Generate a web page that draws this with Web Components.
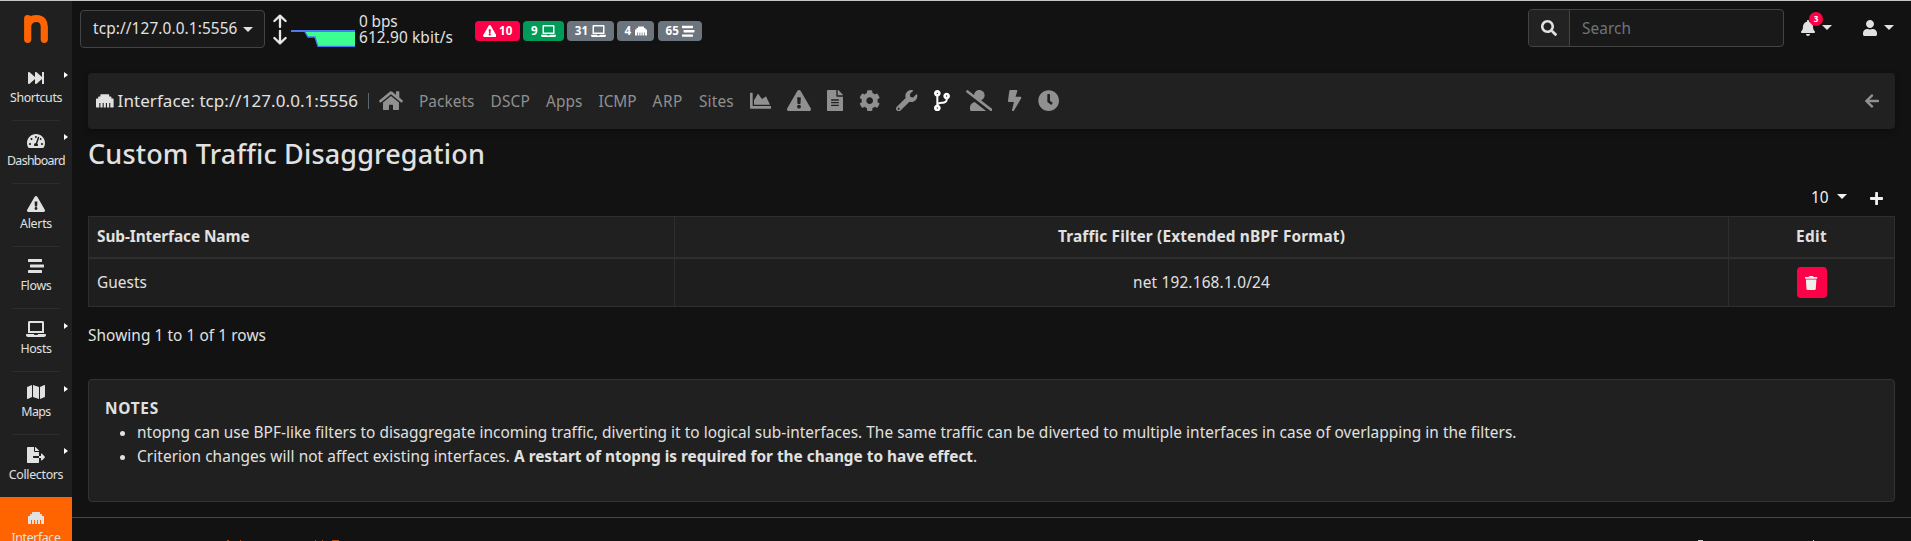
<!DOCTYPE html>
<html lang="en">
<head>
<meta charset="utf-8">
<title>ntopng - Custom Traffic Disaggregation</title>
<style>
html,body{margin:0;height:541px;overflow:hidden;background:#121212}
body{font-family:"Noto Sans",sans-serif;font-size:15.4px;line-height:24px;color:#e1e1e1}
</style>
</head>
<body>
<app-shell></app-shell>
<script>
const ICONS={
forward:[512,"M512 76v360c0 6.6-5.4 12-12 12h-40c-6.6 0-12-5.4-12-12V284.1L276.5 440.6c-20.6 17.2-52.5 2.8-52.5-24.6V284.1L52.5 440.6C31.9 457.8 0 443.4 0 416V96c0-27.4 31.9-41.7 52.5-24.6L224 226.8V96c0-27.4 31.9-41.7 52.5-24.6L448 226.8V76c0-6.6 5.4-12 12-12h40c6.6 0 12 5.4 12 12z"],
warn:[576,"M569.517 440.013C587.975 472.007 564.806 512 527.94 512H48.054c-36.937 0-59.999-40.055-41.577-71.987L246.423 23.985c18.467-32.009 64.72-31.951 83.154 0l239.94 416.028zM288 354c-25.405 0-46 20.595-46 46s20.595 46 46 46 46-20.595 46-46-20.595-46-46-46zm-43.673-165.346l7.418 136c.347 6.364 5.609 11.346 11.982 11.346h48.546c6.373 0 11.635-4.982 11.982-11.346l7.418-136c.375-6.874-5.098-12.654-11.982-12.654h-63.383c-6.884 0-12.356 5.78-11.981 12.654z"],
stream:[512,"M16 128h416c8.84 0 16-7.16 16-16V48c0-8.84-7.16-16-16-16H16C7.16 32 0 39.16 0 48v64c0 8.84 7.16 16 16 16zm480 80H80c-8.84 0-16 7.16-16 16v64c0 8.84 7.16 16 16 16h416c8.84 0 16-7.16 16-16v-64c0-8.84-7.16-16-16-16zm-64 176H16c-8.84 0-16 7.16-16 16v64c0 8.84 7.16 16 16 16h416c8.84 0 16-7.16 16-16v-64c0-8.84-7.16-16-16-16z"],
laptop:[640,"M624 416H381.54c-.74 19.81-14.71 32-32.74 32H288c-18.69 0-33.02-17.47-32.77-32H16c-8.8 0-16 7.2-16 16v16c0 35.2 28.8 64 64 64h512c35.2 0 64-28.8 64-64v-16c0-8.8-7.2-16-16-16zM576 48c0-26.4-21.6-48-48-48H112C85.6 0 64 21.6 64 48v336h512V48zm-64 272H128V64h384v256z"],
map:[576,"M0 117.66v346.32c0 11.32 11.43 19.06 21.94 14.86L160 416V32L20.12 87.95A32.006 32.006 0 0 0 0 117.66zM192 416l192 64V96L192 32v384zM554.06 33.16L416 96v384l139.88-55.95A31.996 31.996 0 0 0 576 394.34V48.02c0-11.32-11.43-19.06-21.94-14.86z"],
export:[576,"M384 121.9c0-6.3-2.5-12.4-7-16.9L279.1 7c-4.5-4.5-10.6-7-17-7H256v128h128zM571 308l-95.7-96.4c-10.1-10.1-27.4-3-27.4 11.3V288h-64v64h64v65.2c0 14.3 17.3 21.4 27.4 11.3L571 332c6.6-6.6 6.6-17.4 0-24zm-379 28v-32c0-8.8 7.2-16 16-16h176V160H248c-13.2 0-24-10.8-24-24V0H24C10.7 0 0 10.7 0 24v464c0 13.3 10.7 24 24 24h336c13.3 0 24-10.7 24-24V352H208c-8.8 0-16-7.2-16-16z"],
ethernet:[512,"M496 192h-48v-48c0-8.8-7.2-16-16-16h-48V80c0-8.8-7.2-16-16-16H144c-8.8 0-16 7.2-16 16v48H80c-8.8 0-16 7.2-16 16v48H16c-8.8 0-16 7.2-16 16v224c0 8.8 7.2 16 16 16h80V320h32v128h64V320h32v128h64V320h32v128h64V320h32v128h80c8.8 0 16-7.2 16-16V208c0-8.8-7.2-16-16-16z"],
gauge:[576,"M288 32C128.94 32 0 160.94 0 320c0 52.8 14.25 102.26 39.06 144.8 5.61 9.62 16.3 15.2 27.44 15.2h443c11.14 0 21.83-5.58 27.44-15.2C561.75 422.26 576 372.8 576 320c0-159.06-128.94-288-288-288zm0 64c14.71 0 26.58 10.13 30.32 23.65-1.11 2.26-2.64 4.23-3.45 6.67l-9.22 27.67c-5.13 3.49-10.97 6.01-17.64 6.01-17.67 0-32-14.33-32-32S270.33 96 288 96zM96 384c-17.67 0-32-14.33-32-32s14.33-32 32-32 32 14.33 32 32-14.33 32-32 32zm48-160c-17.67 0-32-14.33-32-32s14.33-32 32-32 32 14.33 32 32-14.33 32-32 32zm246.77-72.41l-61.33 184C343.13 347.33 352 364.54 352 384c0 11.72-3.38 22.55-8.88 32H232.88c-5.5-9.45-8.88-20.28-8.88-32 0-33.94 26.5-61.43 59.9-63.59l61.34-184.01c4.17-12.56 17.73-19.45 30.36-15.17 12.57 4.19 19.35 17.79 15.17 30.36zm14.66 57.2l15.52-46.55c3.47-1.29 7.13-2.23 11.05-2.23 17.67 0 32 14.33 32 32s-14.33 32-32 32c-11.38-.01-20.89-6.28-26.57-15.22zM480 384c-17.67 0-32-14.33-32-32s14.33-32 32-32 32 14.33 32 32-14.33 32-32 32z"],
home:[576,"M280.37 148.26L96 300.11V464a16 16 0 0 0 16 16l112.06-.29a16 16 0 0 0 15.92-16V368a16 16 0 0 1 16-16h64a16 16 0 0 1 16 16v95.64a16 16 0 0 0 16 16.05L464 480a16 16 0 0 0 16-16V300L295.67 148.26a12.19 12.19 0 0 0-15.3 0zM571.6 251.47L488 182.56V44.05a12 12 0 0 0-12-12h-56a12 12 0 0 0-12 12v72.61L318.47 43a48 48 0 0 0-61 0L4.34 251.47a12 12 0 0 0-1.6 16.9l25.5 31A12 12 0 0 0 45.15 301l235.22-193.74a12.19 12.19 0 0 1 15.3 0L530.9 301a12 12 0 0 0 16.9-1.6l25.5-31a12 12 0 0 0-1.7-16.93z"],
search:[512,"M505 442.7L405.3 343c-4.5-4.5-10.6-7-17-7H372c27.6-35.3 44-79.7 44-128C416 93.1 322.9 0 208 0S0 93.1 0 208s93.1 208 208 208c48.3 0 92.7-16.4 128-44v16.3c0 6.4 2.5 12.5 7 17l99.7 99.7c9.4 9.4 24.6 9.4 33.9 0l28.3-28.3c9.4-9.4 9.4-24.6.1-34zM208 336c-70.7 0-128-57.2-128-128 0-70.7 57.2-128 128-128 70.7 0 128 57.2 128 128 0 70.7-57.2 128-128 128z"],
bell:[448,"M224 512c35.32 0 63.97-28.65 63.97-64H160.03c0 35.35 28.65 64 63.97 64zm215.39-149.71c-19.32-20.76-55.47-51.99-55.47-154.29 0-77.7-54.48-139.9-127.94-155.16V32c0-17.67-14.32-32-31.98-32s-31.98 14.33-31.98 32v20.84C118.56 68.1 64.08 130.3 64.08 208c0 102.3-36.15 133.53-55.47 154.29-6 6.45-8.66 14.16-8.61 21.71.11 16.4 12.98 32 32.1 32h383.8c19.12 0 32-15.6 32.1-32 .05-7.55-2.61-15.27-8.61-21.71z"],
user:[448,"M224 256c70.7 0 128-57.3 128-128S294.7 0 224 0 96 57.3 96 128s57.3 128 128 128zm89.6 32h-16.7c-22.2 10.2-46.9 16-72.9 16s-50.6-5.8-72.9-16h-16.7C60.2 288 0 348.2 0 422.4V464c0 26.5 21.5 48 48 48h352c26.5 0 48-21.5 48-48v-41.6c0-74.2-60.2-134.4-134.4-134.4z"],
chart:[512,"M500 384c6.6 0 12 5.4 12 12v40c0 6.6-5.4 12-12 12H12c-6.6 0-12-5.4-12-12V76c0-6.6 5.4-12 12-12h40c6.6 0 12 5.4 12 12v308h436zM372.7 159.5L288 216l-85.3-113.7c-5.1-6.8-15.5-6.3-19.9 1L96 248v104h384l-89.9-187.8c-3.2-6.5-11.4-8.7-17.4-4.7z"],
file:[384,"M224 136V0H24C10.7 0 0 10.7 0 24v464c0 13.3 10.7 24 24 24h336c13.3 0 24-10.7 24-24V160H248c-13.2 0-24-10.8-24-24zm64 236c0 6.6-5.4 12-12 12H108c-6.6 0-12-5.4-12-12v-8c0-6.6 5.4-12 12-12h168c6.6 0 12 5.4 12 12v8zm0-64c0 6.6-5.4 12-12 12H108c-6.6 0-12-5.4-12-12v-8c0-6.6 5.4-12 12-12h168c6.6 0 12 5.4 12 12v8zm0-72v8c0 6.6-5.4 12-12 12H108c-6.6 0-12-5.4-12-12v-8c0-6.6 5.4-12 12-12h168c6.6 0 12 5.4 12 12zm96-114.1v6.1H256V0h6.1c6.4 0 12.5 2.5 17 7l97.9 98c4.5 4.5 7 10.6 7 16.9z"],
cog:[512,"M487.4 315.7l-42.6-24.6c4.3-23.2 4.3-47 0-70.2l42.6-24.6c4.9-2.8 7.1-8.6 5.5-14-11.1-35.6-30-67.8-54.7-94.6-3.8-4.1-10-5.1-14.8-2.3L380.8 110c-17.9-15.4-38.5-27.3-60.8-35.1V25.8c0-5.6-3.9-10.5-9.4-11.7-36.7-8.2-74.3-7.8-109.2 0-5.5 1.2-9.4 6.1-9.4 11.7V75c-22.2 7.9-42.8 19.8-60.8 35.1L88.7 85.5c-4.9-2.8-11-1.9-14.8 2.3-24.7 26.7-43.6 58.9-54.7 94.6-1.7 5.4.6 11.2 5.5 14L67.3 221c-4.3 23.2-4.3 47 0 70.2l-42.6 24.6c-4.9 2.8-7.1 8.6-5.5 14 11.1 35.6 30 67.8 54.7 94.6 3.8 4.1 10 5.1 14.8 2.3l42.6-24.6c17.9 15.4 38.5 27.3 60.8 35.1v49.2c0 5.6 3.9 10.5 9.4 11.7 36.7 8.2 74.3 7.8 109.2 0 5.5-1.2 9.4-6.1 9.4-11.7v-49.2c22.2-7.9 42.8-19.8 60.8-35.1l42.6 24.6c4.9 2.8 11 1.9 14.8-2.3 24.7-26.7 43.6-58.9 54.7-94.6 1.5-5.5-.7-11.3-5.6-14.1zM256 336c-44.1 0-80-35.9-80-80s35.9-80 80-80 80 35.9 80 80-35.9 80-80 80z"],
wrench:[512,"M507.73 109.1c-2.24-9.03-13.54-12.09-20.12-5.51l-74.36 74.36-67.88-11.31-11.31-67.88 74.36-74.36c6.62-6.62 3.43-17.9-5.66-20.16-47.38-11.74-99.55.91-136.58 37.93-39.64 39.64-50.55 97.1-34.05 147.2L18.74 402.76c-24.99 24.99-24.99 65.51 0 90.5 24.99 24.99 65.51 24.99 90.5 0l213.21-213.21c50.12 16.71 107.47 5.68 147.37-34.22 37.07-37.07 49.7-89.32 37.91-136.73zM64 472c-13.25 0-24-10.75-24-24 0-13.26 10.75-24 24-24s24 10.74 24 24c0 13.25-10.75 24-24 24z"],
branch:[384,"M384 144c0-44.2-35.8-80-80-80s-80 35.8-80 80c0 36.4 24.3 67.1 57.5 76.8-.6 16.1-4.2 28.5-11 36.9-15.4 19.2-49.3 22.4-85.2 25.7-28.2 2.6-57.4 5.4-81.3 16.9v-144c32.5-10.2 56-40.5 56-76.3 0-44.2-35.8-80-80-80S0 35.8 0 80c0 35.8 23.5 66.1 56 76.3v199.3C23.5 365.9 0 396.2 0 432c0 44.2 35.8 80 80 80s80-35.8 80-80c0-34-21.2-63.1-51.2-74.6 3.1-5.2 7.8-9.8 14.9-13.4 16.2-8.2 40.4-10.4 66.1-12.8 42.2-3.9 90-8.4 118.2-43.4 14-17.4 21.1-39.8 21.6-67.9 31.6-10.8 54.4-40.7 54.4-75.9zM80 64c8.8 0 16 7.2 16 16s-7.2 16-16 16-16-7.2-16-16 7.2-16 16-16zm0 384c-8.8 0-16-7.2-16-16s7.2-16 16-16 16 7.2 16 16-7.2 16-16 16zm224-320c8.8 0 16 7.2 16 16s-7.2 16-16 16-16-7.2-16-16 7.2-16 16-16z"],
noUser:[640,"M633.8 458.1L362.3 248.3C412.1 230.7 448 183.8 448 128 448 57.3 390.7 0 320 0c-67.1 0-121.5 51.8-126.9 117.4L45.5 3.4C38.5-2 28.5-.8 23 6.2L3.4 31.4c-5.4 7-4.2 17 2.8 22.4l588.4 454.7c7 5.4 17 4.2 22.5-2.8l19.6-25.3c5.4-6.8 4.1-16.9-2.9-22.3zM96 422.4V464c0 26.5 21.5 48 48 48h350.2L207.4 290.3C144.2 301.3 96 356 96 422.4z"],
bolt:[320,"M296 160H180.6l42.6-129.8C227.2 15 215.7 0 200 0H56C44 0 33.8 8.9 32.2 20.8l-32 240C-1.7 275.2 9.5 288 24 288h118.7L96.6 482.5c-3.6 15.2 8 29.5 23.3 29.5 8.4 0 16.4-4.4 20.8-12l176-304c9.3-15.9-2.2-36-20.7-36z"],
clock:[512,"M256,8C119,8,8,119,8,256S119,504,256,504,504,393,504,256,393,8,256,8Zm92.49,313h0l-20,25a16,16,0,0,1-22.49,2.5h0l-67-49.72a40,40,0,0,1-15-31.23V112a16,16,0,0,1,16-16h32a16,16,0,0,1,16,16V256l58,42.5A16,16,0,0,1,348.49,321Z"],
left:[448,"M257.5 445.1l-22.2 22.2c-9.4 9.4-24.6 9.4-33.9 0L7 273c-9.4-9.4-9.4-24.6 0-33.9L201.4 44.7c9.4-9.4 24.6-9.4 33.9 0l22.2 22.2c9.5 9.5 9.3 25-.4 34.3L136.6 216H424c13.3 0 24 10.7 24 24v32c0 13.3-10.7 24-24 24H136.6l120.5 114.8c9.8 9.3 10 24.8.4 34.3z"],
plus:[448,"M416 208H272V64c0-17.67-14.33-32-32-32h-32c-17.67 0-32 14.33-32 32v144H32c-17.67 0-32 14.33-32 32v32c0 17.67 14.33 32 32 32h144v144c0 17.67 14.33 32 32 32h32c17.67 0 32-14.33 32-32V304h144c17.67 0 32-14.33 32-32v-32c0-17.67-14.33-32-32-32z"],
trash:[448,"M432 32H312l-9.4-18.7A24 24 0 0 0 281.1 0H166.8a23.72 23.72 0 0 0-21.4 13.3L136 32H16A16 16 0 0 0 0 48v32a16 16 0 0 0 16 16h416a16 16 0 0 0 16-16V48a16 16 0 0 0-16-16zM53.2 467a48 48 0 0 0 47.9 45h245.8a48 48 0 0 0 47.9-45L416 128H32z"]
};
function define(name,html,setup){
  customElements.define(name,class extends HTMLElement{
    connectedCallback(){
      if(this.shadowRoot)return;
      const root=this.attachShadow({mode:"open"});
      root.innerHTML=typeof html==="function"?html(this):html;
      if(setup)setup(this,root);
    }
  });
}
/* Solid glyph, sized by its em height. */
define("ui-icon",el=>{
  const [w,d]=ICONS[el.getAttribute("name")],s=+(el.getAttribute("size")||16);
  return `<style>:host{display:inline-flex;flex:none}svg{display:block;fill:currentColor}</style><svg width="${w*s/512}" height="${s}" viewBox="0 0 ${w} 512"><path d="${d}"/></svg>`;
});
/* One-line text that spreads its tracking over a given width. */
define("ui-text",`<style>:host{display:inline-block;flex:none;white-space:nowrap}span{display:inline-block}</style><span><slot></slot></span>`,(el,root)=>{
  const w=+el.getAttribute("w"),span=root.querySelector("span");
  const natural=span.getBoundingClientRect().width;
  span.style.letterSpacing=((w-natural)/el.textContent.length).toFixed(4)+"px";
  el.style.width=w+"px";
});
define("ui-caret",`<style>:host{display:block;flex:none;width:0;height:0;border:5px solid transparent;border-top-color:currentColor;border-bottom:0}</style>`);
define("side-item",el=>`<style>
:host{display:flex;flex-direction:column;align-items:center;position:relative;height:62.8px;flex:none;box-sizing:border-box;padding-top:12.4px;font-size:12.4px;line-height:18px}
:host([active]){background:#ff6400}
ui-icon{height:16px}
ui-text{margin-top:3px}
hr{margin:13px 0 0;border:0;width:48px;height:1px;background:#2c2c2c;flex:none}
i{position:absolute;left:64px;top:14px;border:3.5px solid transparent;border-left:4px solid #fff;border-right:0}
</style><ui-icon name="${el.getAttribute("icon")}"></ui-icon><ui-text w="${el.getAttribute("w")}">${el.getAttribute("label")}</ui-text>${el.hasAttribute("last")?"":"<hr>"}${el.hasAttribute("more")?"<i></i>":""}`);
define("side-bar",`<style>
:host{display:flex;flex-direction:column;width:72px;height:540px;overflow:hidden;background:#202020;flex:none}
svg{display:block;flex:none}
</style>
<svg width="72" height="56.6" viewBox="0 1 72 56.6"><path d="M27.7 18.7V39.3M27.7 25C29 20 33 18.5 36.5 18.5C42 18.5 44.3 22 44.3 27V39.3" fill="none" stroke="#ff6400" stroke-width="7.2" stroke-linecap="round" stroke-linejoin="round"/></svg>
<side-item icon="forward" label="Shortcuts" w="52" more></side-item>
<side-item icon="gauge" label="Dashboard" w="58" more></side-item>
<side-item icon="warn" label="Alerts" w="32"></side-item>
<side-item icon="stream" label="Flows" w="31"></side-item>
<side-item icon="laptop" label="Hosts" w="31" more></side-item>
<side-item icon="map" label="Maps" w="29.5" more></side-item>
<side-item icon="export" label="Collectors" w="54.5" more last></side-item>
<side-item icon="ethernet" label="Interface" w="49" active last></side-item>`);
define("count-badge",el=>`<style>
:host{display:flex;align-items:center;justify-content:center;gap:3px;height:20px;border-radius:4px;background:#6c757d;color:#fff;font-size:11.6px;font-weight:700;line-height:20px;box-sizing:border-box;width:${el.getAttribute("width")}px;flex:none}
:host([tone=red]){background:#ff0048}:host([tone=green]){background:#009b58}
</style><slot></slot>`);
define("top-bar",`<style>
:host{display:flex;height:47px;padding:8px 16px 0 8px;box-sizing:content-box;align-items:flex-start}
.sel{display:flex;align-items:center;gap:5px;box-sizing:border-box;width:185px;height:38px;margin-top:1px;padding-left:12px;border:1px solid #444;border-radius:4px;background:#191919}
.arrows{margin:5px 0 0 8px}
.chart{margin:21px 0 0 4px}
.rate{display:flex;flex-direction:column;line-height:16px;margin:5px 0 0 4px;width:116px}
.badges{display:flex;margin-top:12px;gap:3px}
.search{display:flex;box-sizing:border-box;width:256px;height:38px;border:1px solid #444;border-radius:4px;background:#191919;color:#6c757d;align-items:center;margin-left:auto;overflow:hidden}
.search ui-text{margin-top:2px}
.key{display:flex;align-items:center;justify-content:center;width:40px;height:36px;background:#222;border-right:1px solid #444;color:#e1e1e1;margin-right:12px}
.bell,.user{display:flex;align-items:center;gap:7px;height:38px;position:relative;top:0}
.bell{margin-left:16.5px;width:32px}.user{margin-left:30.5px;width:32px}
.bell ui-caret,.user ui-caret{margin-top:-1px}
b{position:absolute;left:8.5px;top:2.5px;width:14px;height:14px;border-radius:50%;background:#ff0048;color:#fff;font-size:8px;line-height:14px;text-align:center}
</style>
<div class="sel"><ui-text w="144.5">tcp://127.0.0.1:5556</ui-text><ui-caret></ui-caret></div>
<svg class="arrows" width="14" height="31" viewBox="0 0 14 31" fill="none" stroke="#e8e8e8" stroke-width="2.3" stroke-linecap="round" stroke-linejoin="round"><path d="M7 13V2M1.4 7L7 1.6L12.6 7M7 17V28M1.4 24L7 29.4L12.6 24"/></svg>
<svg class="chart" width="64" height="17" viewBox="0 0 64 17"><path d="M13.5 1H64V16H27L24 7H17Z" fill="#3dff91"/><path d="M0 1H64M64 16.5H27L24 7H17L13.5 1" fill="none" stroke="#4d79f2" stroke-width="1.3"/><path d="M0 1H64" stroke="#4d79f2" stroke-width="2"/></svg>
<div class="rate"><ui-text w="38.5">0 bps</ui-text><ui-text w="94">612.90 kbit/s</ui-text></div>
<div class="badges">
<count-badge tone="red" width="45"><ui-icon name="warn" size="12"></ui-icon><ui-text w="13.5">10</ui-text></count-badge>
<count-badge tone="green" width="41"><ui-text w="7">9</ui-text><ui-icon name="laptop" size="12"></ui-icon></count-badge>
<count-badge width="47"><ui-text w="13.5">31</ui-text><ui-icon name="laptop" size="12"></ui-icon></count-badge>
<count-badge width="37"><ui-text w="7">4</ui-text><ui-icon name="ethernet" size="12"></ui-icon></count-badge>
<count-badge width="44" style="margin-left:1px"><ui-text w="13.5">65</ui-text><ui-icon name="stream" size="12.5"></ui-icon></count-badge>
</div>
<div class="search"><span class="key"><ui-icon name="search"></ui-icon></span><ui-text w="49">Search</ui-text></div>
<div class="bell"><ui-icon name="bell"></ui-icon><ui-caret></ui-caret><b>3</b></div>
<div class="user"><ui-icon name="user"></ui-icon><ui-caret></ui-caret></div>`);
define("page-nav",`<style>
:host{display:flex;align-items:center;height:56px;border-radius:4px;background:#212121;box-shadow:0 2px 6px rgba(0,0,0,.35);margin:17px 16px 0;padding:0 16px 0 8px;box-sizing:border-box;color:#909090}
.name{display:flex;align-items:center;gap:4px;color:#e1e1e1;font-size:17px;width:271px}
.bar{width:1px;height:16px;background:#5d666d;margin:0 10px 0 1px}
.links{display:flex;align-items:center;gap:16px}
.links ui-text{margin-top:1px}
.links ui-icon{margin-top:-1px}
.on{color:#fff}
.back{margin-left:auto}
</style>
<div class="name"><ui-icon name="ethernet" size="17.6"></ui-icon><ui-text w="240.5">Interface: tcp://127.0.0.1:5556</ui-text></div>
<span class="bar"></span>
<div class="links">
<ui-icon name="home" size="21.33"></ui-icon>
<ui-text w="55.5">Packets</ui-text><ui-text w="39.5">DSCP</ui-text><ui-text w="36.5">Apps</ui-text><ui-text w="38">ICMP</ui-text><ui-text w="30.5">ARP</ui-text><ui-text w="34.8">Sites</ui-text>
<ui-icon name="chart" size="21.33"></ui-icon><ui-icon name="warn" size="21.33"></ui-icon><ui-icon name="file" size="21.33"></ui-icon><ui-icon name="cog" size="21.33"></ui-icon><ui-icon name="wrench" size="21.33"></ui-icon><ui-icon class="on" name="branch" size="21.33"></ui-icon><ui-icon name="noUser" size="21.33"></ui-icon><ui-icon name="bolt" size="21.33"></ui-icon><ui-icon name="clock" size="21.33"></ui-icon>
</div>
<ui-icon class="back" name="left"></ui-icon>`);
define("filter-table",`<style>
:host{display:block;margin:0 16px}
.tools{display:flex;justify-content:flex-end;align-items:center;box-sizing:border-box;height:38px;padding:2px 12px 0 0;color:#f0f0f0}
.tools ui-caret{margin:-3px 23px 0 8px}
.grid{display:grid;grid-template-columns:585px 1053px 165px;grid-template-rows:40px 47px;column-gap:1px;row-gap:2px;background:#2e2e2e;border:1px solid #2e2e2e;padding:0}
.grid>div{display:flex;align-items:center;justify-content:center;background:#1e1e1e}
.grid>.h{background:#202020;font-weight:700}
.grid>.l{justify-content:flex-start;padding-left:8px}
.del{display:flex;align-items:center;justify-content:center;width:30px;height:31px;border-radius:4px;background:#ff0048;color:#eee}
p{margin:17px 0 0}
</style>
<div class="tools"><ui-text w="18">10</ui-text><ui-caret></ui-caret><ui-icon name="plus" size="15"></ui-icon></div>
<div class="grid">
<div class="h l"><ui-text w="152.5">Sub-Interface Name</ui-text></div><div class="h"><ui-text w="287">Traffic Filter (Extended nBPF Format)</ui-text></div><div class="h"><ui-text w="31">Edit</ui-text></div>
<div class="l"><ui-text w="50">Guests</ui-text></div><div><ui-text w="137">net 192.168.1.0/24</ui-text></div><div><span class="del"><ui-icon name="trash" size="14"></ui-icon></span></div>
</div>
<p><ui-text w="178">Showing 1 to 1 of 1 rows</ui-text></p>`);
define("notes-card",`<style>
:host{display:block;box-sizing:border-box;height:123px;margin:31px 16px 0;padding:17px 16px 16px;border:1px solid #333;border-radius:4px;background:#202020}
ul{margin:0;padding-left:32px}li{height:24px}b{display:block}li b{display:inline}
</style>
<b><ui-text w="54">NOTES</ui-text></b>
<ul><li><ui-text w="1379.5">ntopng can use BPF-like filters to disaggregate incoming traffic, diverting it to logical sub-interfaces. The same traffic can be diverted to multiple interfaces in case of overlapping in the filters.</ui-text></li>
<li><ui-text w="373">Criterion changes will not affect existing interfaces.</ui-text><b style="margin-left:4px"><ui-text w="459">A restart of ntopng is required for the change to have effect</ui-text></b><ui-text w="4">.</ui-text></li></ul>`);
define("page-footer",`<style>
:host{display:flex;flex-direction:column;justify-content:space-between;margin-top:15px;height:24px;border-top:1px solid #484848;box-sizing:border-box}
svg{display:block}
</style><svg style="margin-top:auto" width="1839" height="1"><path d="M155 .5h2M168 .5h1M243 .5h1M250 .5h1M260 .5h7" stroke="#b54a08"/><path d="M1626 .5h5M1741 .5h1" stroke="#c8c8c8"/></svg>`);
define("app-shell",`<style>
:host{display:flex;width:1911px;height:541px;box-sizing:border-box;border-top:1px solid #c4c8c4;overflow:hidden}
main{flex:1;min-width:0;display:flex;flex-direction:column}
h2{font-size:27px;font-weight:500;line-height:34px;height:34px;margin:8px 16px 7px}
h2 ui-text{height:34px}
main>*{flex:none}
</style>
<side-bar></side-bar>
<main><top-bar></top-bar><page-nav></page-nav><h2><ui-text w="397">Custom Traffic Disaggregation</ui-text></h2><filter-table></filter-table><notes-card></notes-card><page-footer></page-footer></main>`);
</script>
</body>
</html>
